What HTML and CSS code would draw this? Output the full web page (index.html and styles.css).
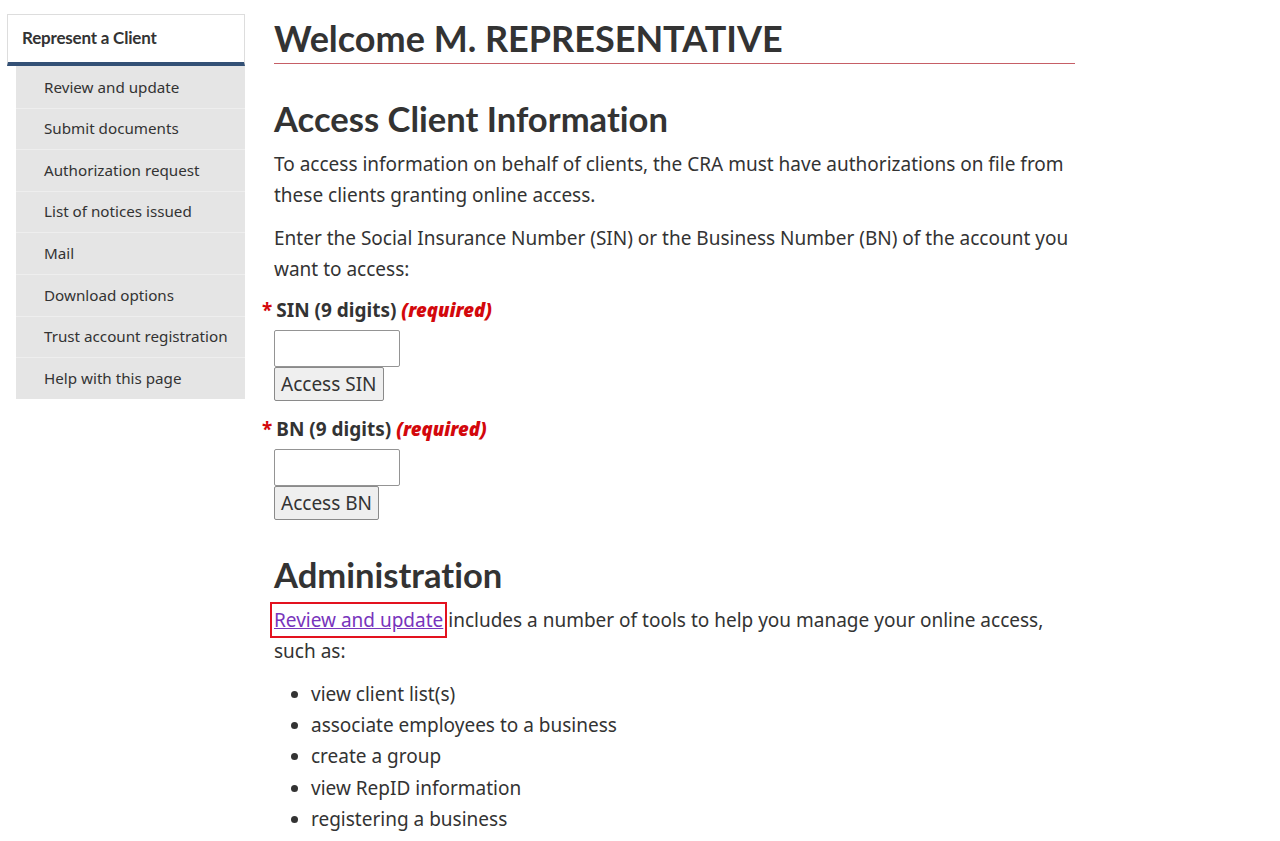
FILE: index.html
```html
<!DOCTYPE html>
<html lang="en">
<head>
<meta charset="utf-8">
<title>Welcome M. REPRESENTATIVE</title>
<link rel="stylesheet" href="styles.css">
</head>
<body>
<div class="page">
  <nav class="sidenav">
    <div class="sidenav-head">Represent a Client</div>
    <ul class="sidenav-list">
      <li><a href="#">Review and update</a></li>
      <li><a href="#">Submit documents</a></li>
      <li><a href="#">Authorization request</a></li>
      <li><a href="#">List of notices issued</a></li>
      <li><a href="#">Mail</a></li>
      <li><a href="#">Download options</a></li>
      <li><a href="#">Trust account registration</a></li>
      <li><a href="#">Help with this page</a></li>
    </ul>
  </nav>
  <main class="content">
    <h1 class="title">Welcome M. REPRESENTATIVE</h1>
    <h2 class="section-title first">Access Client Information</h2>
    <p>To access information on behalf of clients, the CRA must have authorizations on file from these clients granting online access.</p>
    <p class="form-intro">Enter the Social Insurance Number (SIN) or the Business Number (BN) of the account you want to access:</p>
    <form class="access-form">
      <label class="field-label" for="sin"><span class="asterisk">*</span>SIN (9 digits) <strong class="required">(required)</strong></label>
      <input class="field-input" id="sin" type="text">
      <button class="field-btn" type="button">Access SIN</button>
    </form>
    <form class="access-form second">
      <label class="field-label" for="bn"><span class="asterisk">*</span>BN (9 digits) <strong class="required">(required)</strong></label>
      <input class="field-input" id="bn" type="text">
      <button class="field-btn" type="button">Access BN</button>
    </form>
    <h2 class="section-title admin">Administration</h2>
    <p class="admin-text"><a class="visited-link highlighted" href="#">Review and update</a> includes a number of tools to help you manage your online access, such as:</p>
    <ul class="tools">
      <li>view client list(s)</li>
      <li>associate employees to a business</li>
      <li>create a group</li>
      <li>view RepID information</li>
      <li>registering a business</li>
    </ul>
  </main>
</div>
</body>
</html>
```
FILE: styles.css
```css
* { box-sizing: border-box; }
html, body { margin: 0; padding: 0; background: #fff; }
body {
  font-family: "Noto Sans", "DejaVu Sans", sans-serif;
  color: #333;
  font-size: 19px;
  line-height: 31px;
}
.page {
  display: flex;
  align-items: flex-start;
  gap: 29px;
  padding-left: 7px;
}
.sidenav {
  width: 238px;
  flex: none;
  margin-top: 14px;
}
.sidenav-head {
  font-family: Lato, "Liberation Sans", sans-serif;
  font-weight: 700;
  font-size: 17px;
  color: #333;
  background: #fff;
  border: 1px solid #ddd;
  border-bottom: 4px solid #335075;
  height: 52px;
  padding: 12px 0 0 14px;
  line-height: 22px;
  letter-spacing: -0.2px;
}
.sidenav-list {
  list-style: none;
  margin: 0 0 0 9px;
  padding: 0;
  background: #e5e5e5;
}
.sidenav-list li {
  border-top: 1px solid #eeeeee;
  height: 41.6px;
}
.sidenav-list li:first-child { border-top: 0; }
.sidenav-list a {
  display: block;
  color: #333;
  text-decoration: none;
  font-size: 15.2px;
  line-height: 24px;
  padding: 7.6px 0 0 28px;
}
.sidenav-list li:first-child a { padding-top: 9px; }
.content {
  width: 801px;
  flex: none;
}
.title {
  font-family: Lato, "Liberation Sans", sans-serif;
  font-weight: 700;
  font-size: 36px;
  line-height: 46px;
  margin: 15px 0 0;
  padding-bottom: 2px;
  border-bottom: 1px solid #c65e66;
  color: #333;
  font-variant-ligatures: none;
}
.section-title {
  font-family: Lato, "Liberation Sans", sans-serif;
  font-weight: 700;
  font-size: 34.6px;
  line-height: 44px;
  color: #333;
  margin: 0 0 8px;
  font-variant-ligatures: none;
}
.section-title.first { margin-top: 33px; }
p { margin: 0 0 12px; }
p.form-intro { margin-bottom: 9px; }
.access-form {
  display: flex;
  flex-direction: column;
  align-items: flex-start;
}
.access-form.second { margin-top: 12px; }
.field-label {
  font-weight: 700;
  font-size: 19px;
  line-height: 31px;
}
.asterisk {
  color: #d3080c;
  margin-left: -12px;
  margin-right: 4px;
}
.required {
  color: #d3080c;
  font-style: italic;
  font-size: 18.5px;
}
.field-input {
  margin-top: 4px;
  width: 126px;
  height: 37px;
  border: 1px solid #949494;
  border-radius: 2px;
  font: inherit;
  padding: 0 6px;
  background: #fff;
}
.field-btn {
  font-family: "Noto Sans", "DejaVu Sans", sans-serif;
  font-size: 19px;
  color: #333;
  background: #efefef;
  border: 1px solid #8a8a8a;
  border-radius: 2px;
  height: 34px;
  padding: 0 6px;
  line-height: 31px;
}
.section-title.admin { margin-top: 33px; margin-bottom: 8px; }
.admin-text { margin-bottom: 12px; }
.visited-link { color: #7834bc; text-decoration: underline; }
.highlighted {
  padding: 1px 0;
  outline: 2px solid #e3121f;
  outline-offset: 2px;
}
.tools {
  margin: 0;
  padding-left: 37px;
}
.tools li { line-height: 31.2px; }
```
